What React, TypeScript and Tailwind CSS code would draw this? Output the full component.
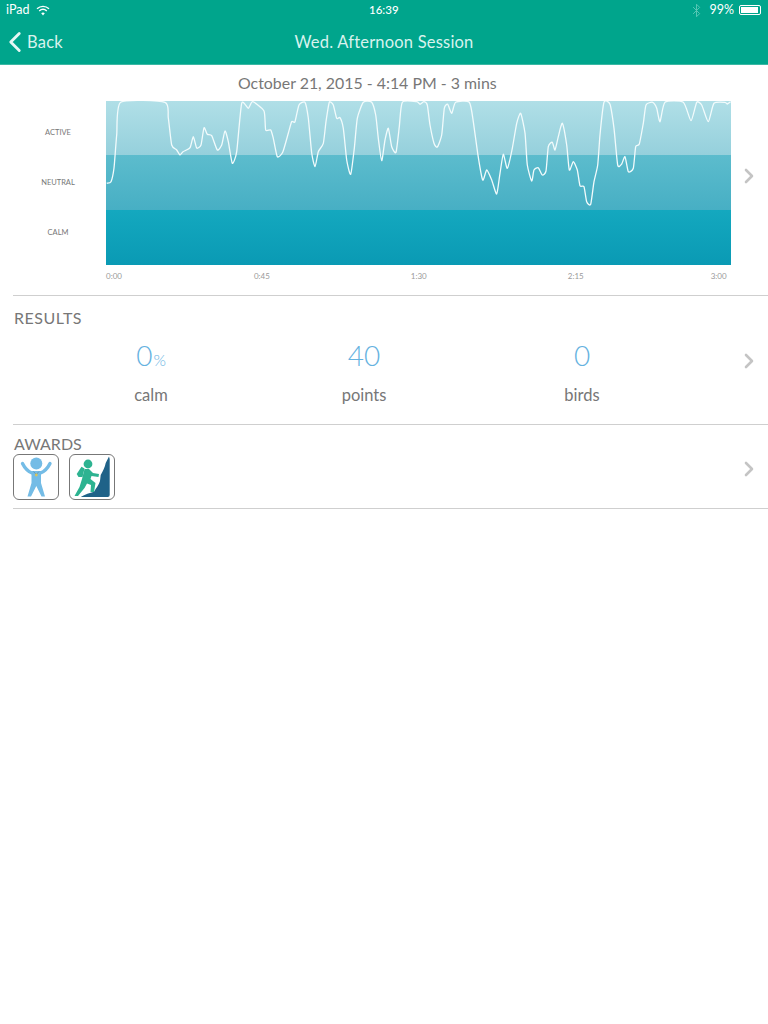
import { ChevronRight, ChevronLeft, Bluetooth } from "lucide-react"

const trace: [number, number][] = [
  [106.7, 183.3], [111, 181.7], [114, 168], [116.7, 135], [120.7, 102.3], [165, 102.3], [168.3, 118], [171.7, 145],
  [176.7, 150], [180, 155], [183, 151.7], [190, 147.7], [193.3, 136.7], [196.7, 148], [201, 145], [204, 127.7],
  [207.3, 134.3], [211.7, 135.7], [217.3, 150], [221.7, 145], [225, 131], [228.3, 141.7], [232.3, 163.3], [236.7, 151.7],
  [241.7, 103.3], [248.3, 108.3], [252.7, 101.7], [264, 111], [265.7, 130], [270.7, 130], [273.3, 138.3], [277.3, 156.7],
  [282.7, 152.3], [288.3, 133.3], [291.7, 121.7], [295, 121.7], [299, 105], [305, 102.3], [308.3, 118], [311.7, 153],
  [315, 166.7], [318.3, 151.7], [323.3, 143.3], [326, 121.7], [329.3, 102.3], [333.3, 105], [336.7, 118.3], [340, 117.7],
  [343.3, 128.3], [346.7, 160], [350.7, 174.3], [354.3, 148.3], [357.3, 118.3], [363.3, 102.3], [371.7, 102.3], [375.7, 115],
  [378.3, 138.3], [381.7, 160.7], [385, 140], [388.3, 128.3], [391.7, 146.7], [396, 152.3], [399.3, 126.7], [402.3, 102.3],
  [416.7, 101.7], [420, 104.3], [424, 101.7], [427.3, 105], [430, 125], [434, 143.3], [437.3, 147], [441.7, 135],
  [444.3, 108.3], [447.7, 104.3], [451.7, 113.3], [455.7, 102.3], [469.3, 102.3], [473.3, 121.7], [477.7, 153.3], [482.7, 180],
  [486.7, 170], [491.7, 180], [496.7, 194], [500, 173.3], [503.3, 154.3], [507.3, 168.3], [512.3, 148.3], [516.7, 123.3],
  [520.7, 113.3], [525, 133], [527.3, 165], [531.7, 181], [534, 170], [538.3, 167.7], [542.3, 175], [546, 171],
  [548.3, 146.7], [552.3, 142.3], [555, 150], [558.3, 136.7], [562.3, 123.3], [566.7, 145], [569.3, 170], [573.3, 161.7],
  [577.3, 170], [580, 185.7], [584, 186.7], [586.7, 201.7], [590.7, 204.3], [594, 181.7], [597.7, 165], [600, 135],
  [604, 102.3], [610, 104.3], [614, 128.3], [617.7, 165], [621.7, 164], [625, 156.7], [628.3, 171.7], [633.3, 168.3],
  [635.7, 146.7], [639.3, 144], [643.3, 123.3], [646, 105], [652.7, 102.3], [656.7, 108.3], [660, 121.7], [665, 102.3],
  [683.3, 102.3], [691, 120.7], [696.7, 102.3], [701.7, 105], [708.3, 121.7], [714, 103.3], [725, 102.3], [727.3, 104], [730.7, 101.7],
]

// smooth the hand read points a bit, chart origin is at 106,101
function tracePath() {
  const pts = trace.map(([x, y]) => [x - 106, y - 101])
  let d = `M${pts[0][0]} ${pts[0][1]}`
  for (let i = 0; i < pts.length - 1; i++) {
    const p0 = pts[Math.max(i - 1, 0)]
    const p1 = pts[i]
    const p2 = pts[i + 1]
    const p3 = pts[Math.min(i + 2, pts.length - 1)]
    const c1x = p1[0] + (p2[0] - p0[0]) / 10
    const c1y = p1[1] + (p2[1] - p0[1]) / 10
    const c2x = p2[0] - (p3[0] - p1[0]) / 10
    const c2y = p2[1] - (p3[1] - p1[1]) / 10
    d += `C${c1x.toFixed(1)} ${c1y.toFixed(1)} ${c2x.toFixed(1)} ${c2y.toFixed(1)} ${p2[0]} ${p2[1]}`
  }
  return d
}

function Chart() {
  return (
    <svg width="625" height="164" viewBox="0 0 625 164" className="block">
      <defs>
        <linearGradient id="bandTop" x1="0" y1="0" x2="0" y2="1">
          <stop offset="0" stopColor="#b0dfe7" />
          <stop offset="1" stopColor="#95d0dc" />
        </linearGradient>
        <linearGradient id="bandMid" x1="0" y1="0" x2="0" y2="1">
          <stop offset="0" stopColor="#5cbccd" />
          <stop offset="1" stopColor="#47afc4" />
        </linearGradient>
        <linearGradient id="bandLow" x1="0" y1="0" x2="0" y2="1">
          <stop offset="0" stopColor="#14a8bf" />
          <stop offset="1" stopColor="#0a9ab4" />
        </linearGradient>
      </defs>
      <rect x="0" y="0" width="625" height="54" fill="url(#bandTop)" />
      <rect x="0" y="54" width="625" height="55" fill="url(#bandMid)" />
      <rect x="0" y="109" width="625" height="55" fill="url(#bandLow)" />
      <path d={tracePath()} fill="none" stroke="#f2fbfc" strokeWidth="1.3" strokeLinejoin="round" />
    </svg>
  )
}

function Wifi() {
  return (
    <svg width="14" height="11" viewBox="0 0 14 11" fill="none" stroke="white" strokeWidth="1.4">
      <path d="M1 3.8C4.5 .6 9.5 .6 13 3.8" />
      <path d="M3.2 6C5.5 4 8.5 4 10.8 6" />
      <path d="M7 10.4 5.2 8.2C6.3 7.4 7.7 7.4 8.8 8.2Z" fill="white" stroke="none" />
    </svg>
  )
}

function PersonBadge() {
  return (
    <div className="w-[46px] h-[46px] rounded-[6px] border border-[#777] bg-white">
      <svg width="44" height="44" viewBox="0 0 44 44">
        <circle cx="22.3" cy="8.5" r="6" fill="#74bce6" />
        <path d="M8.5 8.5C10.5 12.5 14 16.5 18 18M36 8.5C34 12.5 30.5 16.5 26.5 18" fill="none" stroke="#74bce6" strokeWidth="3.4" strokeLinecap="round" />
        <path d="M17.5 16H27V28L31 41.5H27.5L22.3 31 17 41.5H13.5L17.5 28Z" fill="#74bce6" />
        <path d="M19.5 16.5 22.3 19.5 25 16.5" fill="none" stroke="#5b8aa8" strokeWidth="0.7" />
        <circle cx="22.3" cy="20" r="1.4" fill="#d9c35a" />
      </svg>
    </div>
  )
}

function ClimberBadge() {
  return (
    <div className="w-[46px] h-[46px] rounded-[6px] border border-[#777] bg-white">
      <svg width="44" height="44" viewBox="0 0 44 44">
        <path d="M10.7 42C15 39 20 38 24 36.7 26 33 29 30 30 26L30.7 20C33 16 35 12 35.7 8L39 1.5 39.7 4V40Q39.7 42 37.7 42Z" fill="#1f6288" />
        <circle cx="18" cy="9" r="4.4" fill="#2db391" />
        <path d="M6.7 19 11.5 11.7 14.5 13.5 12.5 22 8.5 22Z" fill="#2db391" />
        <path d="M14.5 14H19L23 18 29 19 28.5 22 21.5 21 20.5 24 25.5 28 24 37H20.5L21 30 17 28.5 14.5 33 8 41H4.5L9.5 32 12 24Z" fill="#2db391" />
      </svg>
    </div>
  )
}

function Stat({ value, unit, label, className }: { value: string; unit?: string; label: string; className: string }) {
  return (
    <div className={`absolute top-0 flex flex-col items-center -translate-x-1/2 ${className}`}>
      <div className="h-[38px] flex items-baseline text-[28px] leading-[38px] text-[#65b2df] font-light whitespace-nowrap">
        {value}
        {unit && <span className="text-[16px] ml-[1px]">{unit}</span>}
      </div>
      <div className="mt-[11px] text-[16.5px] leading-5 text-[#777] whitespace-nowrap">{label}</div>
    </div>
  )
}

export default function App() {
  return (
    <div className="w-[768px] h-[1024px] bg-white overflow-hidden font-['Lato','Liberation_Sans',sans-serif]">
      {/* Status bar + nav */}
      <div className="h-[65px] bg-[#00a58c] border-b border-[#3bb8a4] text-white">
        <div className="h-5 px-[6px] flex items-center justify-between text-[12.5px] leading-5 relative">
          <div className="flex items-center gap-[7px]">
            <span>iPad</span>
            <Wifi />
          </div>
          <span className="absolute left-[369px] text-[11.5px] font-medium">16:39</span>
          <div className="flex items-center gap-[5px] pr-[1px]">
            <Bluetooth size={15} strokeWidth={1.5} className="text-[#5cc9b6]" />
            <span>99%</span>
            <div className="w-[22px] h-[10px] border border-white rounded-[2px] p-[1px]">
              <div className="w-[17px] h-full bg-white" />
            </div>
          </div>
        </div>
        <div className="h-[44px] relative flex items-center justify-center pt-[1px] text-[16.5px] tracking-[0.2px]">
          <div className="absolute left-[-2px] top-[5px] flex items-center text-[#d8f3ee]">
            <ChevronLeft size={34} strokeWidth={2} className="text-[#e6f7f4]" />
            <span className="-ml-[5px] pt-[1px]">Back</span>
          </div>
          <span className="text-[#d8f3ee]">Wed. Afternoon Session</span>
        </div>
      </div>

      {/* Chart */}
      <div className="ml-[13px] h-[231px] border-b border-[#cfcfcf] relative">
        <div className="pt-[8px] pl-[225px] text-[15.9px] leading-[20px] text-[#777] whitespace-nowrap">
          October 21, 2015 - 4:14 PM - 3 mins
        </div>
        <div className="mt-[8px] flex">
          <div className="w-[93px] pt-[25px] pr-[3px] flex flex-col items-center text-[7.5px] leading-[14px] text-[#777] gap-[36px]">
            <span>ACTIVE</span>
            <span>NEUTRAL</span>
            <span>CALM</span>
          </div>
          <Chart />
          <ChevronRight size={24} strokeWidth={2.6} className="text-[#c4c4c4] ml-[6px] mt-[63px]" />
        </div>
        <div className="ml-[93px] mt-[5px] flex text-[8px] leading-[12px] text-[#9a9a9a]">
          <span>0:00</span>
          <span className="ml-[132px]">0:45</span>
          <span className="ml-[141px]">1:30</span>
          <span className="ml-[141px]">2:15</span>
          <span className="ml-[127px]">3:00</span>
        </div>
      </div>

      {/* Results */}
      <div className="ml-[13px] h-[129px] border-b border-[#cfcfcf] relative">
        <div className="pl-[1px] pt-[12px] text-[16px] leading-5 tracking-[0.5px] text-[#777]">RESULTS</div>
        <div className="relative mt-[8px]">
          <Stat value="0" unit="%" label="calm" className="left-[138px]" />
          <Stat value="40" label="points" className="left-[351px]" />
          <Stat value="0" label="birds" className="left-[569px]" />
        </div>
        <ChevronRight size={24} strokeWidth={2.6} className="absolute left-[724px] top-[53px] text-[#c4c4c4]" />
      </div>

      {/* Awards */}
      <div className="ml-[13px] h-[84px] border-b border-[#cfcfcf] relative">
        <div className="pl-[1px] pt-[9px] text-[16px] leading-5 text-[#777]">AWARDS</div>
        <div className="flex gap-[10px]">
          <PersonBadge />
          <ClimberBadge />
        </div>
        <ChevronRight size={24} strokeWidth={2.6} className="absolute left-[724px] top-[32px] text-[#c4c4c4]" />
      </div>
    </div>
  )
}
